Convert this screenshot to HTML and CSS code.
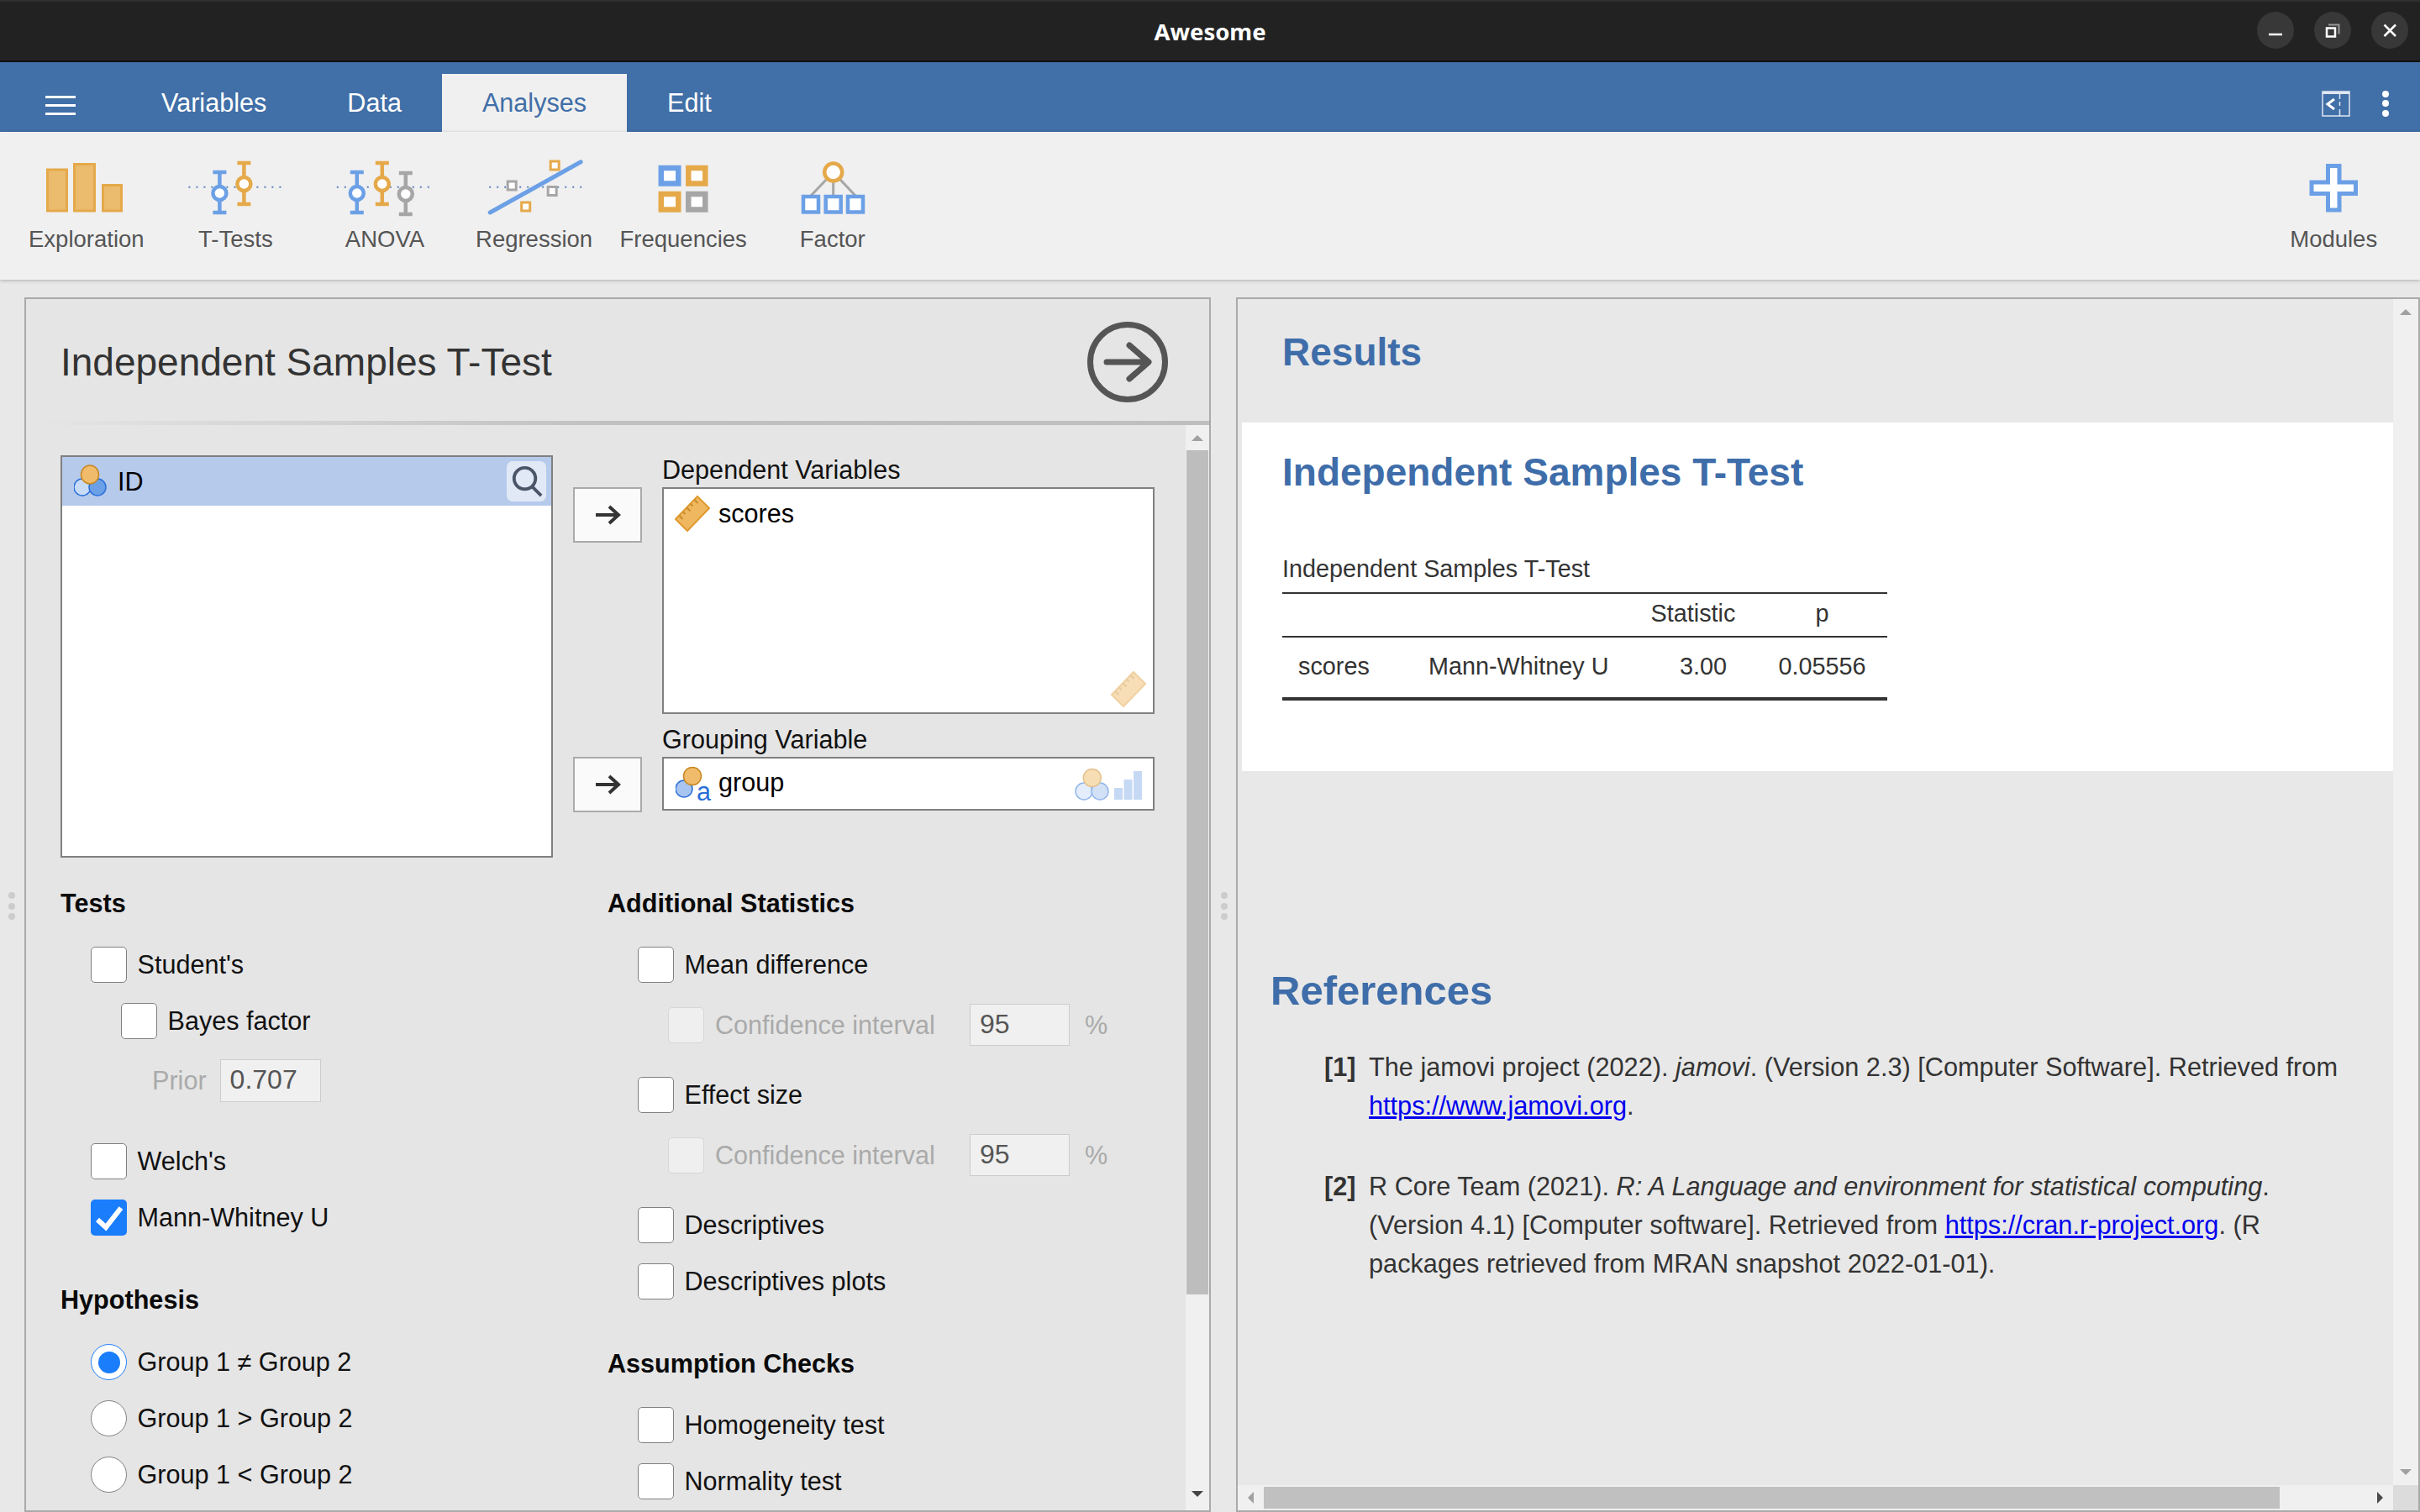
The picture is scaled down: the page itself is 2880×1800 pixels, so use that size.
FILE: index.html
```html
<!DOCTYPE html>
<html lang="en">
<head>
  <meta charset="UTF-8" />
  <title>Awesome</title>
  <link rel="stylesheet" href="styles.css">
</head>
<body>

  <div class="titlebar">
    <span class="title-text">Awesome</span>
    <div class="win-buttons">
      <span class="win-btn"><svg viewBox="0 0 44 44"><path class="win-line" d="M14 27h16"/></svg></span>
      <span class="win-btn"><svg viewBox="0 0 44 44"><path class="win-back" d="M17 15.500h12.500v11"/><rect class="win-line" x="15" y="19.500" width="10" height="10"/></svg></span>
      <span class="win-btn"><svg viewBox="0 0 44 44"><path class="win-x" d="M15.500 15.500l13.500 13.500M29 15.500l-13.500 13.500"/></svg></span>
    </div>
  </div>

  <div class="menubar">
    <div class="hamburger"><span></span><span></span><span></span></div>
    <div class="tab">Variables</div>
    <div class="tab">Data</div>
    <div class="tab active">Analyses</div>
    <div class="tab">Edit</div>
    <div class="menu-right">
      <svg class="panel-icon" viewBox="0 0 34 31">
        <rect class="pi-frame" x="1" y="1" width="32" height="29"/>
        <path class="pi-top" d="M1 2.500h32"/>
        <path class="pi-div" d="M21.500 3v7M21.500 13v5M21.500 22v8"/>
        <path class="pi-chev" d="M15 10l-8 6 8 6"/>
      </svg>
      <div class="dots-menu"><span></span><span></span><span></span></div>
    </div>
  </div>

  <div class="ribbon">
    <div class="rib-btn">
      <svg class="rib-icon" viewBox="14 185 177.600 80">
        <rect class="bar" x="56.500" y="202" width="23" height="49"/>
        <rect class="bar" x="88.500" y="195.500" width="24" height="55.500"/>
        <rect class="bar" x="122.500" y="220.500" width="22" height="30.500"/>
      </svg>
      <span>Exploration</span>
    </div>
    <div class="rib-btn">
      <svg class="rib-icon" viewBox="191.600 185 177.600 80">
        <path class="dotted" d="M224 222.700h110"/>
        <path class="s-blue" d="M253 205h16M261 205v48M253 253h16"/>
        <circle class="s-blue ring" cx="261" cy="230" r="8"/>
        <path class="s-orange" d="M282 194h16M290 194v49M282 243h16"/>
        <circle class="s-orange ring" cx="290" cy="219" r="8"/>
      </svg>
      <span>T-Tests</span>
    </div>
    <div class="rib-btn">
      <svg class="rib-icon" viewBox="369.200 185 177.600 80">
        <path class="dotted" d="M401 222.700h110"/>
        <path class="s-blue" d="M417 205h16M425 205v48M417 253h16"/>
        <circle class="s-blue ring" cx="425" cy="230" r="8"/>
        <path class="s-orange" d="M447 194h16M455 194v49M447 243h16"/>
        <circle class="s-orange ring" cx="455" cy="219" r="8"/>
        <path class="s-grey" d="M475 206h16M483 206v49M475 255h16"/>
        <circle class="s-grey ring" cx="483" cy="231" r="8"/>
      </svg>
      <span>ANOVA</span>
    </div>
    <div class="rib-btn">
      <svg class="rib-icon" viewBox="546.800 185 177.600 80">
        <path class="dotted" d="M582 222.700h111"/>
        <path class="reg-line" d="M583 253L691 192.800"/>
        <rect class="s-orange ring thin" x="655" y="192" width="10" height="10"/>
        <rect class="s-grey ring thin" x="604" y="216" width="10" height="10"/>
        <rect class="s-grey ring thin" x="652" y="222.500" width="10" height="10"/>
        <rect class="s-orange ring thin" x="620.500" y="241" width="10" height="10"/>
      </svg>
      <span>Regression</span>
    </div>
    <div class="rib-btn">
      <svg class="rib-icon" viewBox="724.400 185 177.600 80">
        <rect class="s-blue ring fat" x="787.200" y="200" width="20.500" height="18.500"/>
        <rect class="s-orange ring fat" x="819.700" y="200" width="20" height="18.500"/>
        <rect class="s-orange ring fat" x="787.200" y="231" width="20.500" height="18.500"/>
        <rect class="s-grey ring fat" x="819.700" y="231" width="20" height="18.500"/>
      </svg>
      <span>Frequencies</span>
    </div>
    <div class="rib-btn">
      <svg class="rib-icon" viewBox="902 185 177.600 80">
        <path class="s-grey lines" d="M991.700 205L965 233M991.700 205V233M991.700 205L1018 233"/>
        <circle class="s-orange ring" cx="991.700" cy="205" r="10.500"/>
        <rect class="s-blue ring" x="956" y="234" width="18" height="18.500"/>
        <rect class="s-blue ring" x="982.700" y="234" width="18" height="18.500"/>
        <rect class="s-blue ring" x="1009" y="234" width="18" height="18.500"/>
      </svg>
      <span>Factor</span>
    </div>
    <div class="rib-btn modules">
      <svg class="rib-icon" viewBox="2688 185 177.600 80">
        <path class="s-blue ring plus" d="M2770.500 197.500h13.500v19.500h19.500v13.500h-19.500v19.500h-13.500v-19.500h-19.500v-13.500h19.500z"/>
      </svg>
      <span>Modules</span>
    </div>
  </div>

  <div class="main">

    <div class="splitter left-split"><span></span><span></span><span></span></div>

    <!-- analysis options -->
    <div class="pane options-pane">
      <div class="pane-head">
        <h1 class="pane-title">Independent Samples T-Test</h1>
        <svg class="go-icon" viewBox="0 0 96 96">
          <circle class="go-ring" cx="48" cy="48" r="44.500"/>
          <path class="go-arrow" d="M23 48h49M50 28l23 20-23 20"/>
        </svg>
      </div>
      <div class="pane-body">
        <div class="options">

          <div class="supplier">
            <div class="var-list">
              <div class="var-row">
                <svg class="var-icon" viewBox="0 0 42 44">
                  <circle class="c-light" cx="10" cy="29" r="10"/>
                  <circle class="c-blue" cx="28" cy="29" r="10"/>
                  <ellipse class="c-orange" cx="19" cy="14" rx="10.500" ry="11"/>
                </svg>
                <span>ID</span>
                <div class="search-btn">
                  <svg viewBox="0 0 48 48"><circle class="search-glass" cx="22" cy="21" r="13"/><path class="search-glass" d="M31 31l11 11"/></svg>
                </div>
              </div>
            </div>

            <div class="arrow-col">
              <div class="arrow-btn"><svg viewBox="0 0 34 26"><path class="small-arrow" d="M3 13h27M19 3l11 10-11 10"/></svg></div>
              <div class="arrow-btn"><svg viewBox="0 0 34 26"><path class="small-arrow" d="M3 13h27M19 3l11 10-11 10"/></svg></div>
            </div>

            <div class="targets">
              <div class="target-label">Dependent Variables</div>
              <div class="target-box dep-box">
                <svg class="var-icon ruler-icon" viewBox="0 0 42 44">
                  <path class="ruler" d="M27 2L41 16 15 43 1 29z"/>
                  <path class="ruler-tick" d="M23.500 6l4 4M19 11l2.500 2.500M14.500 15.500l4 4M10 20.500l2.500 2.500M5.500 25l4 4"/>
                </svg>
                <span>scores</span>
                <svg class="hint-ruler" viewBox="0 0 42 44">
                  <path class="ruler" d="M27 2L41 16 15 43 1 29z"/>
                  <path class="ruler-tick" d="M23.500 6l4 4M19 11l2.500 2.500M14.500 15.500l4 4M10 20.500l2.500 2.500M5.500 25l4 4"/>
                </svg>
              </div>
              <div class="target-label second">Grouping Variable</div>
              <div class="target-box group-box">
                <span class="group-icon">
                  <svg viewBox="0 0 36 42">
                    <circle class="c-mid" cx="10" cy="30" r="10"/>
                    <circle class="c-orange" cx="20" cy="15" r="10.500"/>
                  </svg>
                  <span class="group-a">a</span>
                </span>
                <span>group</span>
                <svg class="hint-group" viewBox="0 0 80 40">
                  <circle class="c-light" cx="11" cy="28" r="10"/>
                  <circle class="c-mid" cx="30" cy="28" r="10"/>
                  <circle class="c-orange" cx="20.800" cy="12" r="10.500"/>
                  <rect class="hint-bar" x="47" y="24" width="10" height="14"/>
                  <rect class="hint-bar" x="58.500" y="14" width="10" height="24"/>
                  <rect class="hint-bar" x="70" y="4" width="10" height="34"/>
                </svg>
              </div>
            </div>
          </div>

          <div class="opt-columns">
            <div class="opt-col">
              <h2 class="opt-head">Tests</h2>
              <label class="opt"><span class="cb"></span>Student's</label>
              <label class="opt sub"><span class="cb"></span>Bayes factor</label>
              <div class="prior-row"><span class="dim">Prior</span><span class="num-box prior-box">0.707</span></div>
              <label class="opt welch"><span class="cb"></span>Welch's</label>
              <label class="opt"><span class="cb checked"><svg viewBox="0 0 43 43"><path class="check" d="M8 24l10 9L36 10"/></svg></span>Mann-Whitney U</label>
              <h2 class="opt-head later hypothesis">Hypothesis</h2>
              <label class="opt"><span class="rb selected"><span class="rb-dot"></span></span>Group 1 ≠ Group 2</label>
              <label class="opt"><span class="rb"></span>Group 1 &gt; Group 2</label>
              <label class="opt"><span class="rb"></span>Group 1 &lt; Group 2</label>
            </div>
            <div class="opt-col">
              <h2 class="opt-head">Additional Statistics</h2>
              <label class="opt"><span class="cb"></span>Mean difference</label>
              <div class="ci-row"><span class="cb off"></span><span class="dim ci-text">Confidence interval</span><span class="num-box ci-box">95</span><span class="dim">%</span></div>
              <label class="opt after-ci"><span class="cb"></span>Effect size</label>
              <div class="ci-row"><span class="cb off"></span><span class="dim ci-text">Confidence interval</span><span class="num-box ci-box">95</span><span class="dim">%</span></div>
              <label class="opt after-ci"><span class="cb"></span>Descriptives</label>
              <label class="opt"><span class="cb"></span>Descriptives plots</label>
              <h2 class="opt-head later">Assumption Checks</h2>
              <label class="opt"><span class="cb"></span>Homogeneity test</label>
              <label class="opt"><span class="cb"></span>Normality test</label>
            </div>
          </div>
        </div>

        <div class="vbar opt-bar">
          <div class="sb-btn"><i class="tri-up"></i></div>
          <div class="sb-thumb"></div>
          <div class="sb-rest"><i class="tri-down dark"></i></div>
        </div>
      </div>
    </div>

    <div class="splitter"><span></span><span></span><span></span></div>

    <!-- results -->
    <div class="pane results-pane">
      <div class="results-top">
        <div class="results-scroll">
          <div class="results-head">Results</div>
          <div class="result-card">
            <h1 class="result-title">Independent Samples T-Test</h1>
            <div class="table-title">Independent Samples T-Test</div>
            <table class="result-table">
              <colgroup><col class="c1"><col class="c2"><col class="c3"><col class="c4"></colgroup>
              <thead>
                <tr><th></th><th></th><th>Statistic</th><th>p</th></tr>
              </thead>
              <tbody>
                <tr><td class="cell-first">scores</td><td>Mann-Whitney U</td><td class="cell-stat">3.00</td><td class="cell-p">0.05556</td></tr>
              </tbody>
            </table>
          </div>

          <div class="refs">
            <div class="refs-head">References</div>
            <div class="ref"><b>[1]</b><p>The jamovi project (2022). <i>jamovi</i>. (Version 2.3) [Computer Software]. Retrieved from <a href="#">https://www.jamovi.org</a>.</p></div>
            <div class="ref"><b>[2]</b><p>R Core Team (2021). <i>R: A Language and environment for statistical computing</i>. (Version 4.1) [Computer software]. Retrieved from <a href="#">https://cran.r-project.org</a>. (R packages retrieved from MRAN snapshot 2022-01-01).</p></div>
          </div>
        </div>
        <div class="vbar res-bar">
          <i class="tri-up"></i>
          <i class="tri-down"></i>
        </div>
      </div>
      <div class="hbar">
        <div class="hb-btn"><i class="tri-left"></i></div>
        <div class="hb-thumb"></div>
        <div class="hb-rest"><i class="tri-right"></i></div>
        <div class="hb-corner"></div>
      </div>
    </div>
  </div>

</body>
</html>
```

FILE: styles.css
```css
* {
  box-sizing: border-box;
}

html, body {
  margin: 0;
  width: 2880px;
  height: 1800px;
  overflow: hidden;
}

body {
  font-family: "Liberation Sans", Arial, sans-serif;
  font-size: 30.600px;
  color: #111;
  background-color: #e8e8e8;
  display: flex;
  flex-direction: column;
}

/* window title */
.titlebar {
  height: 74px;
  flex: none;
  display: flex;
  align-items: center;
  justify-content: center;
  position: relative;
  background-color: #222;
  border-top: 2px solid #303030;
  border-bottom: 2px solid #0f0f0f;
}

.title-text {
  font-family: "Noto Sans", sans-serif;
  font-weight: 700;
  font-size: 27.500px;
  color: #fff;
}

.win-buttons {
  position: absolute;
  right: 14px;
  top: 12px;
  display: flex;
  gap: 24px;
}

.win-btn {
  width: 44px;
  height: 44px;
  border-radius: 50%;
  background-color: #383838;
}

.win-btn svg {
  display: block;
}

.win-line {
  fill: none;
  stroke: #fff;
  stroke-width: 2.500;
}

.win-back {
  fill: none;
  stroke: #999;
  stroke-width: 2;
}

.win-x {
  fill: none;
  stroke: #fff;
  stroke-width: 2.500;
}

/* menu */
.menubar {
  height: 83px;
  flex: none;
  display: flex;
  align-items: flex-end;
  background-color: #416fa7;
  position: relative;
}

.hamburger {
  width: 144px;
  height: 69px;
  padding: 26px 0 0 54px;
}

.hamburger span {
  display: block;
  width: 36px;
  height: 3px;
  margin-bottom: 7px;
  background-color: #fff;
}

.tab {
  height: 69px;
  padding: 0 48px;
  line-height: 68px;
  color: #fff;
  font-size: 30.600px;
}

.tab.active {
  background-color: #f0f0f0;
  color: #416fa7;
}

.menu-right {
  margin-left: auto;
  display: flex;
  align-items: center;
  height: 83px;
  padding-top: 15px;
  padding-right: 37px;
  gap: 38px;
}

.panel-icon {
  width: 34px;
  height: 31px;
}

.pi-frame, .pi-top, .pi-div {
  fill: none;
  stroke: #dfe7f2;
  stroke-width: 1.500;
}

.pi-top {
  stroke-width: 3;
}

.pi-chev {
  fill: none;
  stroke: #fff;
  stroke-width: 3;
}

.dots-menu span {
  display: block;
  width: 8px;
  height: 8px;
  border-radius: 50%;
  background-color: #fff;
  margin: 3.500px 0;
}

/* ribbon */
.ribbon {
  height: 176px;
  flex: none;
  display: flex;
  padding: 0 14px;
  background-color: #f0f0f0;
  box-shadow: 0 1px 4px rgba(0, 0, 0, 0.25);
  position: relative;
}

.rib-btn {
  width: 177.600px;
  padding-top: 28px;
  display: flex;
  flex-direction: column;
  align-items: center;
  font-size: 27.500px;
  line-height: 40px;
  color: #555;
}

.rib-icon {
  display: block;
  width: 177.600px;
  height: 80px;
}

.modules {
  margin-left: auto;
}

.bar {
  fill: #ebbb6e;
  stroke: #e5a94a;
  stroke-width: 3;
}

.s-blue { stroke: #6ca0e6; fill: none; stroke-width: 4.500; }
.s-orange { stroke: #e5a94a; fill: none; stroke-width: 4.500; }
.s-grey { stroke: #a6a6a6; fill: none; stroke-width: 4.500; }

.ring {
  fill: #fff;
}

.thin {
  stroke-width: 3;
}

.fat {
  stroke-width: 6.500;
}

.lines {
  stroke-width: 3;
}

.plus {
  stroke-width: 5;
}

.dotted {
  fill: none;
  stroke: #5a82b8;
  stroke-width: 2;
  stroke-dasharray: 2 7;
}

.reg-line {
  fill: none;
  stroke: #6ca0e6;
  stroke-width: 5;
  stroke-linecap: round;
}

/* panes */
.main {
  flex: 1;
  display: flex;
  padding-top: 21px;
  min-height: 0;
}

.pane {
  border: 2px solid #aaa;
  display: flex;
  flex-direction: column;
  height: 1446px;
}

.options-pane {
  width: 1412px;
  background-color: #e5e5e5;
}

.results-pane {
  width: 1409px;
  background-color: #e8e8e8;
}

.splitter {
  width: 30px;
  flex: none;
  padding: 708px 0 0 12px;
}

.left-split {
  width: 29px;
  padding-left: 10px;
}

.splitter span {
  display: block;
  width: 8px;
  height: 8px;
  border-radius: 50%;
  background-color: #ccc;
  margin-bottom: 4.500px;
}

.pane-head {
  height: 150px;
  flex: none;
  display: flex;
  align-items: center;
  justify-content: space-between;
  padding: 5px 49px 0 41px;
  border-bottom: 5px solid transparent;
  border-image: linear-gradient(to right, #e5e5e5 1%, #c0c0c0 50%, #bfbfbf) 1;
}

.pane-title {
  margin: 0;
  font-weight: normal;
  font-size: 46px;
  color: #333;
}

.go-icon {
  width: 96px;
  height: 96px;
}

.go-ring, .go-arrow {
  fill: none;
  stroke: #555;
  stroke-width: 7;
  stroke-linecap: round;
  stroke-linejoin: round;
}

.pane-body {
  flex: 1;
  min-height: 0;
  display: flex;
}

.options {
  flex: 1;
  padding: 36px 0 0 41px;
  overflow: hidden;
}

.supplier {
  display: flex;
  align-items: flex-start;
}

.var-list {
  width: 586px;
  height: 479px;
  border: 2px solid #808080;
  background-color: #fff;
}

.var-row {
  height: 58px;
  display: flex;
  align-items: center;
  position: relative;
  padding-left: 14px;
  gap: 10px;
  background-color: #b6caec;
  color: #000;
}

.var-icon {
  width: 42px;
  height: 44px;
  flex: none;
}

.c-light { fill: #c8dcf8; stroke: #2a6fd8; stroke-width: 1.500; }
.c-blue { fill: #6ca0e6; stroke: #2a6fd8; stroke-width: 1.500; }
.c-mid { fill: #a8c4f0; stroke: #2a6fd8; stroke-width: 1.500; }
.c-orange { fill: #f0bc6c; stroke: #c88820; stroke-width: 1.500; }

.search-btn {
  position: absolute;
  right: 6px;
  top: 5px;
  width: 47px;
  height: 48px;
  border-radius: 7px;
  background-color: #e1e8f6;
}

.search-btn svg {
  display: block;
}

.search-glass {
  fill: none;
  stroke: #4a5568;
  stroke-width: 4;
}

.arrow-col {
  width: 82px;
  margin: 0 24px;
  padding-top: 38px;
  display: flex;
  flex-direction: column;
  gap: 255px;
}

.arrow-btn {
  height: 66px;
  display: flex;
  align-items: center;
  justify-content: center;
  border: 2px solid #aaa;
  background-color: #fafafa;
}

.arrow-btn svg {
  width: 34px;
  height: 26px;
}

.small-arrow {
  fill: none;
  stroke: #333;
  stroke-width: 4;
}

.targets {
  width: 586px;
}

.target-label {
  height: 38px;
  line-height: 34px;
}

.target-label.second {
  margin-top: 13px;
}

.target-box {
  border: 2px solid #808080;
  background-color: #fff;
  position: relative;
  display: flex;
  color: #000;
}

.dep-box {
  height: 270px;
  align-items: flex-start;
  padding: 6px 0 0 13px;
  gap: 10px;
  line-height: 46px;
}

.ruler-icon {
  margin-top: 1px;
}

.ruler {
  fill: #efb860;
  stroke: #e09a30;
  stroke-width: 2;
}

.ruler-tick {
  fill: none;
  stroke: #c98a2a;
  stroke-width: 2;
}

.hint-ruler {
  position: absolute;
  right: 8px;
  bottom: 6px;
  width: 42px;
  height: 44px;
  opacity: 0.45;
}

.group-box {
  height: 64px;
  align-items: center;
  padding: 0 0 4px 14px;
  gap: 0;
}

.group-icon {
  width: 51px;
  height: 44px;
  flex: none;
  position: relative;
}

.group-icon svg {
  width: 36px;
  height: 42px;
  display: block;
}

.group-a {
  position: absolute;
  left: 25px;
  top: 15px;
  color: #2a6fd8;
  line-height: 36px;
}

.hint-group {
  position: absolute;
  right: 13px;
  top: 11px;
  width: 80px;
  height: 40px;
  opacity: 0.5;
}

.hint-bar {
  fill: #8fb4ea;
}

.opt-columns {
  display: grid;
  grid-template-columns: 651px 1fr;
  margin-top: 36px;
}

.opt-col {
  display: flex;
  flex-direction: column;
  align-items: flex-start;
}

.opt-head {
  margin: 0 0 34px;
  height: 36px;
  line-height: 36px;
  font-size: 30.600px;
  font-weight: bold;
  color: #0a0a0a;
}

.opt-head.later {
  margin-top: 58px;
}

.opt-head.hypothesis {
  margin-bottom: 35px;
}

.opt {
  display: flex;
  align-items: center;
  height: 43px;
  gap: 12.500px;
  margin-left: 36px;
}

.opt + .opt {
  margin-top: 24px;
}

.opt.sub {
  margin-left: 72px;
}

.opt.welch {
  margin-top: 49px;
}

.opt.after-ci {
  margin-top: 37px;
}

.cb {
  width: 43px;
  height: 43px;
  flex: none;
  display: block;
  border: 1px solid #808080;
  border-radius: 5px;
  background-color: #fff;
}

.cb.checked {
  border: none;
  background-color: #1a7dfb;
}

.cb.checked svg {
  display: block;
}

.check {
  fill: none;
  stroke: #fff;
  stroke-width: 6;
}

.cb.off {
  background-color: #efefef;
  border-color: #d6d6d6;
}

.rb {
  width: 43px;
  height: 43px;
  flex: none;
  display: flex;
  align-items: center;
  justify-content: center;
  border: 1px solid #808080;
  border-radius: 50%;
  background-color: #fff;
}

.rb.selected {
  border-color: #1a7dfb;
}

.rb-dot {
  width: 26px;
  height: 26px;
  border-radius: 50%;
  background-color: #1a7dfb;
}

.dim {
  color: #aaa;
}

.num-box {
  display: block;
  height: 51px;
  line-height: 47px;
  padding-left: 11px;
  background-color: #f0f0f0;
  border: 1px solid #ccc;
  color: #555;
  font-size: 32px;
}

.prior-row {
  display: flex;
  align-items: center;
  margin: 24px 0 0 109px;
  gap: 16px;
}

.prior-box {
  width: 120px;
}

.ci-row {
  display: flex;
  align-items: center;
  margin: 25px 0 0 72px;
  height: 50px;
}

.ci-text {
  width: 316px;
  padding-left: 13px;
}

.ci-box {
  width: 119px;
  height: 50px;
  margin-right: 18px;
}

/* scrollbars */
.vbar {
  flex: none;
  display: flex;
  flex-direction: column;
}

.opt-bar {
  width: 28px;
  background-color: #f0f0f0;
}

.sb-btn {
  height: 30px;
  display: flex;
  align-items: center;
  justify-content: center;
}

.sb-thumb {
  height: 1005px;
  margin: 0 1px;
  background-color: #bdbdbd;
}

.sb-rest {
  flex: 1;
  display: flex;
  align-items: flex-end;
  justify-content: center;
  padding-bottom: 16px;
}

i.tri-up, i.tri-down, i.tri-left, i.tri-right {
  display: block;
  width: 0;
  height: 0;
  border-style: solid;
  border-color: transparent;
}

i.tri-up {
  border-width: 0 7px 7px;
  border-bottom-color: #a0a0a0;
}

i.tri-down {
  border-width: 7px 7px 0;
  border-top-color: #a0a0a0;
}

i.tri-down.dark {
  border-top-color: #444;
}

i.tri-left {
  border-width: 7px 7px 7px 0;
  border-right-color: #a0a0a0;
}

i.tri-right {
  border-width: 7px 0 7px 7px;
  border-left-color: #4a4a4a;
}

.res-bar {
  width: 30px;
  background-color: #f0f0f0;
  justify-content: space-between;
  align-items: center;
  padding: 12px 0;
}

.results-top {
  flex: 1;
  min-height: 0;
  display: flex;
}

.results-scroll {
  flex: 1;
  overflow: hidden;
}

.results-head {
  height: 147px;
  padding: 38px 0 0 53px;
  line-height: 50px;
  font-size: 46px;
  font-weight: bold;
  color: #3e6da9;
}

.result-card {
  margin-left: 5px;
  height: 415px;
  padding: 34px 0 0 48px;
  background-color: #fff;
}

.result-title {
  margin: 0 0 72px;
  line-height: 50px;
  font-size: 46px;
  font-weight: bold;
  color: #3e6da9;
}

.table-title {
  line-height: 36px;
  margin: 0 0 10px;
  font-size: 28.800px;
  color: #333;
}

.result-table {
  width: 720px;
  table-layout: fixed;
  border-collapse: collapse;
  font-size: 28.800px;
  color: #333;
  border-top: 2px solid #333;
  border-bottom: 4px solid #333;
}

.result-table .c1 { width: 174px; }
.result-table .c2 { width: 239px; }
.result-table .c3 { width: 152px; }
.result-table .c4 { width: 155px; }

.result-table th {
  height: 52px;
  padding: 0 0 4px;
  font-weight: normal;
  text-align: center;
  border-bottom: 2px solid #333;
}

.result-table td {
  height: 74px;
  padding: 0 0 2px;
}

.result-table .cell-first {
  padding-left: 19px;
}

.result-table .cell-stat {
  text-align: right;
  padding-right: 36px;
}

.result-table .cell-p {
  text-align: center;
}

.refs {
  padding: 233px 0 0 39px;
  color: #333;
}

.refs-head {
  line-height: 56px;
  font-size: 49px;
  font-weight: bold;
  color: #3e6da9;
  margin-bottom: 41px;
}

.ref {
  display: flex;
  padding-left: 64px;
  margin-bottom: 50px;
  font-size: 30.700px;
  line-height: 46px;
  width: 1300px;
}

.ref b {
  width: 53px;
  flex: none;
}

.ref p {
  margin: 0;
}

.ref a {
  color: #0000ee;
}

.hbar {
  height: 30px;
  flex: none;
  display: flex;
  background-color: #f0f0f0;
}

.hb-btn {
  width: 31px;
  display: flex;
  align-items: center;
  justify-content: center;
}

.hb-thumb {
  width: 1209px;
  margin: 2px 0;
  background-color: #c0c0c0;
}

.hb-rest {
  flex: 1;
  display: flex;
  align-items: center;
  justify-content: flex-end;
  padding-right: 12px;
}

.hb-corner {
  width: 30px;
  background-color: #dcdcdc;
}
```
